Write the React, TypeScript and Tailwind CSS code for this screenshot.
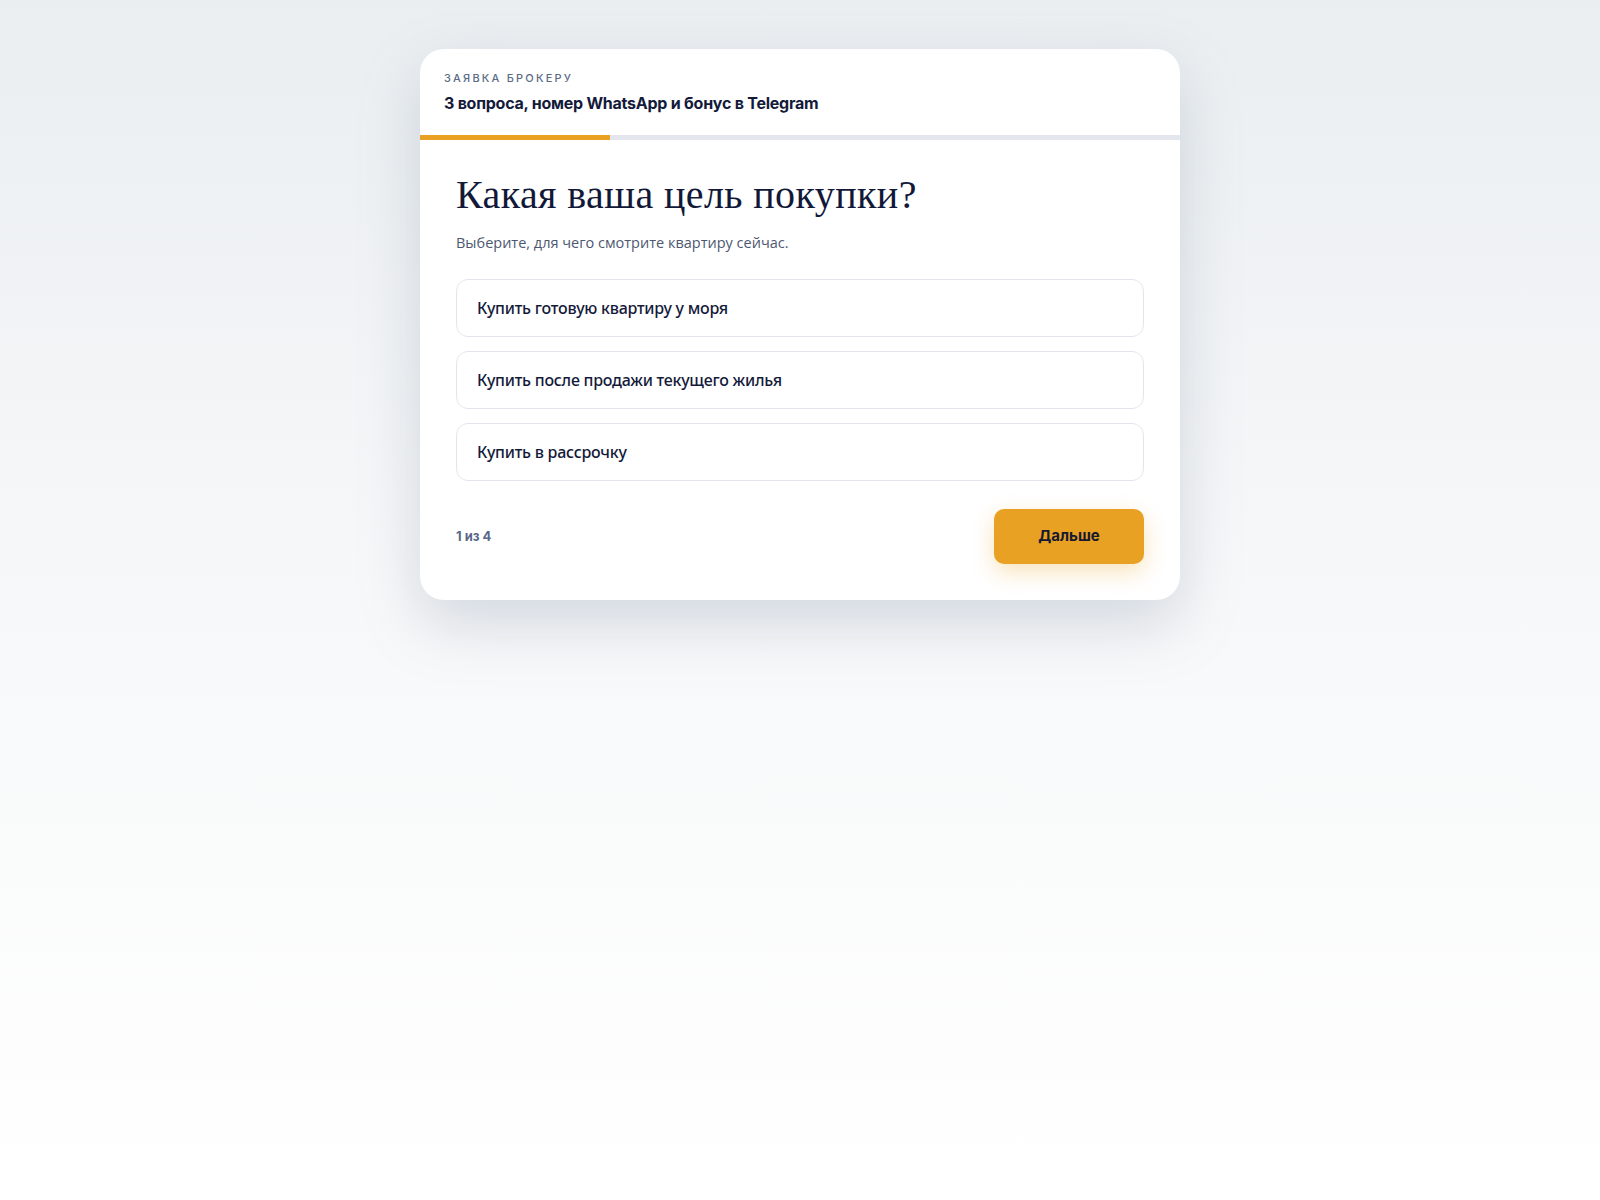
import { useState } from "react";

const options = [
  "Купить готовую квартиру у моря",
  "Купить после продажи текущего жилья",
  "Купить в рассрочку",
];

export default function App() {
  const [selected, setSelected] = useState<number | null>(null);

  return (
    <div className="min-h-[1200px] w-full bg-gradient-to-b from-[#eaeef1] via-[#f7f8f9] to-white font-['Noto_Sans',sans-serif]">
      <div className="flex justify-center pt-[49px]">
        <div className="w-[760px] overflow-hidden rounded-[24px] bg-white shadow-[0_24px_60px_rgba(120,135,160,0.28)]">
          {/* Шапка */}
          <div className="px-6 pt-[21px] pb-5">
            <div className="font-['Inter',sans-serif] text-[11px] leading-4 font-medium uppercase tracking-[0.2em] text-[#5b6b86]">
              Заявка брокеру
            </div>
            <div className="mt-[5px] font-['Inter',sans-serif] text-[16px] leading-6 font-bold tracking-[-0.015em] text-[#131a3a]">
              3 вопроса, номер WhatsApp и бонус в Telegram
            </div>
          </div>

          {/* Прогресс */}
          <div className="h-[5px] w-full bg-[#e3e7ed]">
            <div className="h-full w-1/4 bg-[#e8a122]" />
          </div>

          {/* Вопрос */}
          <div className="px-9 pt-8 pb-[36px]">
            <h1 className="font-['Liberation_Serif',serif] text-[40px] leading-[46px] tracking-[0.01em] text-[#121938]">
              Какая ваша цель покупки?
            </h1>
            <p className="mt-[14px] font-['Open_Sans',sans-serif] text-[14.5px] leading-[22px] text-[#4d5870]">
              Выберите, для чего смотрите квартиру сейчас.
            </p>

            <div className="mt-[25px] flex flex-col gap-[14px]">
              {options.map((opt, i) => (
                <button
                  key={opt}
                  onClick={() => setSelected(i)}
                  className={
                    selected === i
                      ? "flex h-[58px] items-center rounded-xl border border-[#e8a122] bg-[#fff8ec] px-5 text-left text-[16px] font-medium tracking-[-0.015em] text-[#141a3a]"
                      : "flex h-[58px] items-center rounded-xl border border-[#e2e6ec] bg-white px-5 text-left text-[16px] font-medium tracking-[-0.015em] text-[#141a3a]"
                  }
                >
                  {opt}
                </button>
              ))}
            </div>

            <div className="mt-7 flex items-center justify-between">
              <span className="font-['Inter',sans-serif] text-[13px] font-bold text-[#59688a]">1 из 4</span>
              <button className="h-[55px] w-[150px] rounded-[10px] bg-[#e8a122] font-['Inter',sans-serif] text-[15px] font-bold text-[#161a30] shadow-[0_8px_22px_rgba(232,161,34,0.3)]">
                Дальше
              </button>
            </div>
          </div>
        </div>
      </div>
    </div>
  );
}
